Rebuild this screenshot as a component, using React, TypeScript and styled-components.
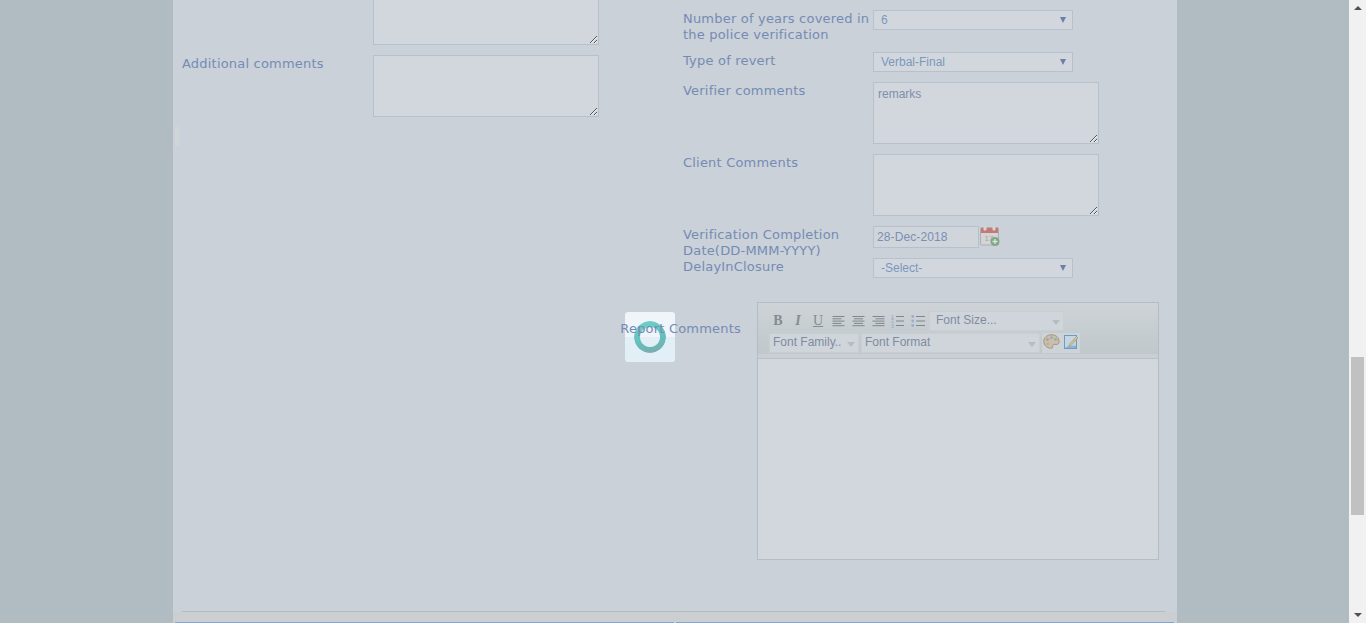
import styled, { createGlobalStyle } from "styled-components";

const GlobalStyle = createGlobalStyle`
  html, body {
    margin: 0;
    height: 100%;
    overflow: hidden;
  }
  body {
    background: #b1bcc2;
    font-family: "DejaVu Sans", Verdana, sans-serif;
  }
`;

export default function App() {
  return (
    <Screen>
      <GlobalStyle />
      <Backdrop>
        <Panel>
          <Columns>
            <LeftColumn>
              <Row>
                <LeftLabel />
                <Comments $clipped $height={45} />
              </Row>
              <Row>
                <LeftLabel>Additional comments</LeftLabel>
                <Comments />
              </Row>
              <Sliver />
            </LeftColumn>
            <RightColumn>
              <Row>
                <RightLabel>
                  Number of years covered in the police verification
                </RightLabel>
                <Dropdown value="6" />
              </Row>
              <Row>
                <RightLabel>Type of revert</RightLabel>
                <Dropdown value="Verbal-Final" />
              </Row>
              <Row>
                <RightLabel>Verifier comments</RightLabel>
                <Comments defaultValue="remarks" />
              </Row>
              <Row>
                <RightLabel>Client Comments</RightLabel>
                <Comments />
              </Row>
              <Row $tight>
                <RightLabel>Verification Completion Date(DD-MMM-YYYY)</RightLabel>
                <DateInput readOnly defaultValue="28-Dec-2018" />
                <CalendarIcon />
              </Row>
              <Row $tight>
                <RightLabel>DelayInClosure</RightLabel>
                <Dropdown value="-Select-" />
              </Row>
            </RightColumn>
          </Columns>

          <EditorRow>
            <EditorLabel>Report Comments</EditorLabel>
            <Editor>
              <Toolbar>
                <ToolRow>
                  <ToolButton $bold>B</ToolButton>
                  <ToolButton $italic>I</ToolButton>
                  <ToolButton $underline>U</ToolButton>
                  <ToolIcon><AlignGlyph mode="left" /></ToolIcon>
                  <ToolIcon><AlignGlyph mode="center" /></ToolIcon>
                  <ToolIcon><AlignGlyph mode="right" /></ToolIcon>
                  <ToolIcon><NumberedListGlyph /></ToolIcon>
                  <ToolIcon><BulletListGlyph /></ToolIcon>
                  <ToolSelect $width={135} $gap={1} $inset={6}>Font Size...</ToolSelect>
                </ToolRow>
                <ToolRow>
                  <ToolSelect $width={90} $inset={3}>Font Family..</ToolSelect>
                  <ToolSelect $width={179} $gap={2} $inset={3}>Font Format</ToolSelect>
                  <IconGroup>
                    <PaletteIcon />
                    <ImageDocIcon />
                  </IconGroup>
                </ToolRow>
              </Toolbar>
              <EditorBody />
            </Editor>
          </EditorRow>

          <Footer>
            <Divider />
            <Tabs>
              <TabLine $width={499} />
              <TabLine $width={498} />
            </Tabs>
          </Footer>
        </Panel>
        <Spinner>
          <SpinnerRing />
        </Spinner>
      </Backdrop>
      <Scrollbar>
        <ArrowUp />
        <Track>
          <Thumb />
        </Track>
        <ArrowDown />
      </Scrollbar>
    </Screen>
  );
}

function Dropdown({ value }: { value: string }) {
  return (
    <SelectWrap>
      <SelectField defaultValue={value}>
        <option>{value}</option>
      </SelectField>
    </SelectWrap>
  );
}

function AlignGlyph({ mode }: { mode: "left" | "center" | "right" }) {
  const lines = [12, 9, 12, 9, 12];
  return (
    <svg width="13" height="12" viewBox="0 0 13 12">
      {lines.map((w, i) => {
        let x = 0.5;
        if (mode === "center") x = 0.5 + (12 - w) / 2;
        if (mode === "right") x = 12.5 - w;
        return <rect key={i} x={x} y={1 + i * 2.3} width={w} height="1" fill="#80868c" />;
      })}
    </svg>
  );
}

function NumberedListGlyph() {
  return (
    <svg width="14" height="14" viewBox="0 0 14 14">
      <text x="0" y="4.5" fontSize="5" fontFamily="Liberation Sans, sans-serif" fill="#8aa6c6">1</text>
      <text x="0" y="9" fontSize="5" fontFamily="Liberation Sans, sans-serif" fill="#8aa6c6">2</text>
      <text x="0" y="13.5" fontSize="5" fontFamily="Liberation Sans, sans-serif" fill="#8aa6c6">3</text>
      <rect x="5" y="2" width="8" height="1" fill="#80868c" />
      <rect x="5" y="6.5" width="8" height="1" fill="#80868c" />
      <rect x="5" y="11" width="8" height="1" fill="#80868c" />
    </svg>
  );
}

function BulletListGlyph() {
  return (
    <svg width="14" height="14" viewBox="0 0 14 14">
      <circle cx="1.7" cy="2.5" r="1.4" fill="#97aecb" />
      <circle cx="1.7" cy="7" r="1.4" fill="#97aecb" />
      <circle cx="1.7" cy="11.5" r="1.4" fill="#97aecb" />
      <rect x="5" y="2" width="9" height="1" fill="#80868c" />
      <rect x="5" y="6.5" width="9" height="1" fill="#80868c" />
      <rect x="5" y="11" width="9" height="1" fill="#80868c" />
    </svg>
  );
}

function CalendarIcon() {
  return (
    <CalendarSvg width="20" height="20" viewBox="0 0 20 20">
      <rect x="0.5" y="1.5" width="18" height="17.5" rx="1" fill="#d3d4d3" stroke="#adafaf" />
      <rect x="1" y="2" width="17" height="5" fill="#c5777a" />
      <rect x="3.5" y="0" width="3" height="4.500" rx="1" fill="#d5d6d4" />
      <rect x="12.5" y="0" width="3" height="4.500" rx="1" fill="#d5d6d4" />
      <text x="4.500" y="15" fontSize="8" fontFamily="Liberation Sans, sans-serif" fill="#a5a8a9">17</text>
      <circle cx="15" cy="15.500" r="4.500" fill="#7fa985" />
      <path d="M15 13v5M12.500 15.500h5" stroke="#dbe6db" strokeWidth="1.300" />
    </CalendarSvg>
  );
}

function PaletteIcon() {
  return (
    <svg width="17" height="15" viewBox="0 0 17 15">
      <path
        d="M8.500 .8C4.200 .8.800 3.500.800 7.300c0 3.900 3.300 6.900 7 6.900 1.800 0 2.200-.8 1.900-1.900-.3-1.100.3-1.900 1.500-1.900h2.600c1.400 0 2.400-1 2.300-2.700C15.900 3.600 13 .8 8.500 .8z"
        fill="#c8bfae"
        stroke="#a0957f"
      />
      <circle cx="4.500" cy="5.500" r="1.400" fill="#bd9a96" />
      <circle cx="8.500" cy="3.800" r="1.400" fill="#92aebb" />
      <circle cx="12.500" cy="5.500" r="1.400" fill="#9bb096" />
      <circle cx="4.800" cy="9.800" r="1.400" fill="#bfae8c" />
    </svg>
  );
}

function ImageDocIcon() {
  return (
    <svg width="16" height="16" viewBox="0 0 16 16">
      <rect x="1.500" y="1.500" width="12" height="13" fill="#c5d5e3" stroke="#6d9bc2" />
      <path d="M2 14l3-2 8-.5V14z" fill="#8fb2cf" />
      <path d="M6.500 10l7-7.500 1.500 1.500-7 7.500-2 .5z" fill="#cbc195" stroke="#9a9068" strokeWidth=".5" />
    </svg>
  );
}

const Screen = styled.div`
  display: flex;
  width: 1366px;
  height: 623px;
  overflow: hidden;
  background: #b1bcc2;
`;

const Backdrop = styled.div`
  position: relative;
  flex: 1;
  padding-left: 173px;
`;

const Panel = styled.div`
  width: 1004px;
  height: 623px;
  box-sizing: border-box;
  background: #cad1d8;
  overflow: hidden;
`;

const Columns = styled.div`
  display: flex;
  height: 278px;
  padding-left: 9px;
`;

const LeftColumn = styled.div`
  width: 501px;
  display: flex;
  flex-direction: column;
`;

const RightColumn = styled.div`
  padding-top: 10px;
  display: flex;
  flex-direction: column;
`;

const Row = styled.div<{ $tight?: boolean }>`
  display: flex;
  align-items: flex-start;
  margin-bottom: ${(p) => (p.$tight ? "0" : "10px")};
`;

const Label = styled.label`
  display: block;
  box-sizing: border-box;
  margin: 1px 0 -1px;
  color: #758bb5;
  font-family: "DejaVu Sans", Verdana, sans-serif;
  font-size: 13px;
  letter-spacing: 0.2px;
  line-height: 16px;
`;

const LeftLabel = styled(Label)`
  width: 191px;
  flex: none;
`;

const RightLabel = styled(Label)`
  width: 190px;
  flex: none;
`;

const Comments = styled.textarea<{ $clipped?: boolean; $height?: number }>`
  display: block;
  box-sizing: border-box;
  width: 226px;
  height: ${(p) => p.$height ?? 62}px;
  margin: 0;
  padding: 4px;
  background: #d2d7dd;
  border: 1px solid #b7c0cd;
  border-top-width: ${(p) => (p.$clipped ? 0 : 1)}px;
  border-radius: 0;
  color: #808ea8;
  font-family: "Liberation Sans", Arial, sans-serif;
  font-size: 12px;
  resize: both;
  outline: none;
`;

const SelectWrap = styled.div`
  position: relative;
  width: 200px;
  height: 20px;

  &::after {
    content: "";
    position: absolute;
    right: 7px;
    top: 7px;
    border-left: 3px solid transparent;
    border-right: 3px solid transparent;
    border-top: 6px solid #6c7fa8;
    pointer-events: none;
  }
`;

const SelectField = styled.select`
  display: block;
  box-sizing: border-box;
  width: 100%;
  height: 100%;
  margin: 0;
  padding: 0 0 0 7px;
  appearance: none;
  background: #d2d7dd;
  border: 1px solid #b7c0cd;
  border-radius: 0;
  color: #7a97bd;
  font-family: "Liberation Sans", Arial, sans-serif;
  font-size: 12px;
  outline: none;
`;

const DateInput = styled.input`
  display: block;
  box-sizing: border-box;
  width: 106px;
  height: 22px;
  margin: 0;
  padding: 0 3px;
  background: #cfd5db;
  border: 1px solid #b7c0cd;
  border-radius: 0;
  color: #7a8fb5;
  font-family: "Liberation Sans", Arial, sans-serif;
  font-size: 12px;
  letter-spacing: 0.1px;
  outline: none;
`;

const CalendarSvg = styled.svg`
  display: block;
  margin-left: 1px;
`;

const Sliver = styled.div`
  width: 4px;
  height: 19px;
  margin-left: -7px;
  background: #d0d5d8;
`;

const EditorRow = styled.div`
  display: flex;
  justify-content: flex-end;
  align-items: flex-start;
  gap: 16px;
  margin-top: 24px;
  padding-right: 18px;
`;

const EditorLabel = styled(Label)`
  margin-top: 19px;
  position: relative;
  z-index: 2;
  white-space: nowrap;
`;

const Editor = styled.div`
  box-sizing: border-box;
  width: 402px;
  height: 258px;
  border: 1px solid #b4bcc4;
  display: flex;
  flex-direction: column;
`;

const Toolbar = styled.div`
  box-sizing: border-box;
  height: 55px;
  padding: 8px 0 0 11px;
  background: linear-gradient(#ced3d8, #bfc8ca 93%, #c9cfd4 93%);
  display: flex;
  flex-direction: column;
  gap: 2px;
`;

const ToolRow = styled.div`
  display: flex;
  align-items: center;
  height: 20px;
`;

const ToolButton = styled.span<{ $bold?: boolean; $italic?: boolean; $underline?: boolean }>`
  width: 20px;
  flex: none;
  margin-left: ${(p) => (p.$bold ? "-1px" : "0")};
  text-align: center;
  color: #868b8f;
  font-family: "Liberation Serif", "Times New Roman", serif;
  font-size: 14px;
  font-weight: ${(p) => (p.$bold || p.$italic ? 700 : 400)};
  font-style: ${(p) => (p.$italic ? "italic" : "normal")};
  text-decoration: ${(p) => (p.$underline ? "underline" : "none")};
`;

const ToolIcon = styled.span`
  width: 20px;
  height: 20px;
  flex: none;
  display: flex;
  align-items: center;
  justify-content: center;
`;

const ToolSelect = styled.div<{ $width: number; $gap?: number; $inset: number }>`
  position: relative;
  box-sizing: border-box;
  width: ${(p) => p.$width}px;
  height: 20px;
  margin-left: ${(p) => p.$gap ?? 0}px;
  padding-left: ${(p) => p.$inset}px;
  flex: none;
  background: #d0d5db;
  border: 1px solid #c8ced3;
  color: #7f8ca0;
  font-family: "Liberation Sans", Arial, sans-serif;
  font-size: 12px;
  line-height: 17px;

  &::after {
    content: "";
    position: absolute;
    right: 3px;
    top: 8px;
    border-left: 4px solid transparent;
    border-right: 4px solid transparent;
    border-top: 5px solid #b6bcc2;
  }
`;

const IconGroup = styled.div`
  box-sizing: border-box;
  display: flex;
  align-items: flex-start;
  gap: 3px;
  height: 20px;
  margin-left: 2px;
  padding: 1px 1px 0;
  background: #ced3d8;
`;

const EditorBody = styled.div`
  flex: 1;
  border-top: 1px solid #b9c1c7;
  background: #d2d7dd;
`;

const Footer = styled.div`
  margin-top: 51px;
  padding-bottom: 1px;
  background: linear-gradient(#cad1d8 1px, #cccfd2 1px);
`;

const Divider = styled.div`
  height: 1px;
  margin: 0 12px 0 9px;
  background: #b5bcbf;
`;

const Tabs = styled.div`
  display: flex;
  gap: 2px;
  margin: 10px 0 0 2px;
`;

const TabLine = styled.div<{ $width: number }>`
  width: ${(p) => p.$width}px;
  height: 1px;
  background: #7ea6d6;
`;

const Spinner = styled.div`
  position: absolute;
  left: 625px;
  top: 312px;
  width: 50px;
  height: 50px;
  border-radius: 3px;
  background: linear-gradient(#eff5f9 50%, #e3eff6 50%);
  display: flex;
  align-items: center;
  justify-content: center;
`;

const SpinnerRing = styled.div`
  width: 32px;
  height: 32px;
  border-radius: 50%;
  background: linear-gradient(165deg, #70d2ca, #66bdbb 60%, #7fa9ab);
  mask: radial-gradient(circle, transparent 9.5px, #000 10.5px);
`;

const Scrollbar = styled.div`
  width: 17px;
  flex: none;
  background: #f1f1f1;
  display: flex;
  flex-direction: column;
  align-items: center;
`;

const ArrowUp = styled.div`
  flex: none;
  margin-top: 6px;
  border-left: 4px solid transparent;
  border-right: 4px solid transparent;
  border-bottom: 4px solid #505050;
`;

const ArrowDown = styled.div`
  flex: none;
  margin-bottom: 6px;
  border-left: 4px solid transparent;
  border-right: 4px solid transparent;
  border-top: 4px solid #505050;
`;

const Track = styled.div`
  flex: 1;
  width: 100%;
  box-sizing: border-box;
  padding: 347px 2px 0;
`;

const Thumb = styled.div`
  height: 158px;
  background: #c1c1c1;
`;
